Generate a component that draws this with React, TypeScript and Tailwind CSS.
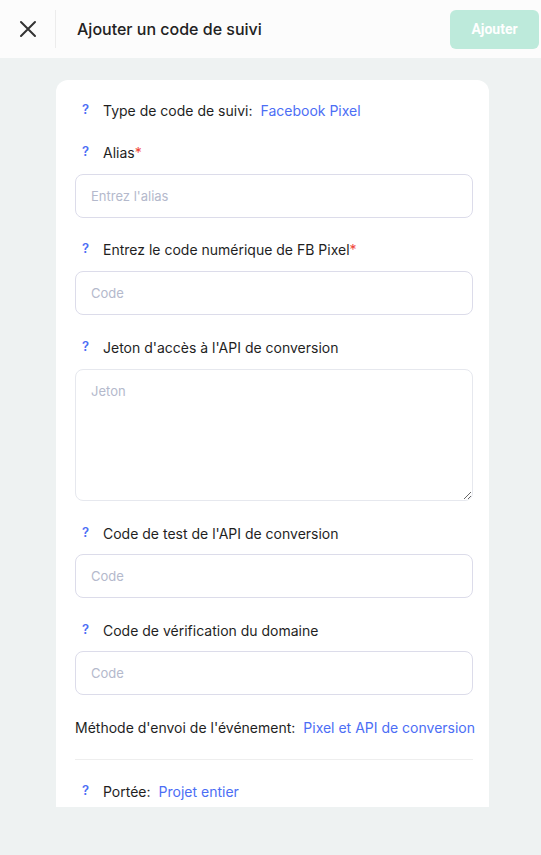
import React from "react";

const Help = () => (
    <span className="w-[21px] shrink-0 text-[13px] font-semibold text-[#4c6ef5]">?</span>
);

const Label = ({ text, required }: { text: string; required?: boolean }) => (
    <div className="flex items-center h-5 pl-[7px] text-[14px] text-[#1f1f1f] whitespace-nowrap">
        <Help />
        <span>
            {text}
            {required && <span className="text-[#f04438]">*</span>}
        </span>
    </div>
);

const Field = ({
    label,
    placeholder,
    required,
    top = "mt-[22px]",
    gap = "gap-3",
}: {
    label: string;
    placeholder: string;
    required?: boolean;
    top?: string;
    gap?: string;
}) => (
    <div className={`${top} flex flex-col ${gap}`}>
        <Label text={label} required={required} />
        <input
            placeholder={placeholder}
            className="h-[44px] w-full rounded-lg border border-[#dcdcea] bg-white px-[15px] text-[13px] outline-none placeholder:text-[#b4b9cc]"
        />
    </div>
);

const App = () => {
    return (
        <div className="h-[855px] w-full overflow-hidden bg-[#eef2f2] font-['Inter',sans-serif]">
            <header className="flex h-[58px] items-center justify-between bg-[#fcfcfc] pr-[2px]">
                <div className="flex h-full items-center">
                    <button className="flex h-full w-[55px] items-center justify-center text-[#333]">
                        <svg width="18" height="18" viewBox="0 0 18 18" fill="none" stroke="currentColor" strokeWidth="2" strokeLinecap="round">
                            <path d="M2 2L16 16M16 2L2 16" />
                        </svg>
                    </button>
                    <div className="h-[38px] w-px bg-[#ececec]" />
                    <h1 className="ml-[21px] text-[16px] font-medium text-[#222]">Ajouter un code de suivi</h1>
                </div>
                <button className="h-[39px] w-[89px] rounded-md bg-[#bdeadb] text-[14px] font-bold text-white font-['Roboto',sans-serif]">
                    Ajouter
                </button>
            </header>

            <main className="pl-[56px] pt-[22px]">
                <div className="h-[727px] w-[433px] overflow-hidden rounded-t-xl bg-white pl-[19px] pr-[16px] pt-5">
                    <div className="flex h-5 items-center whitespace-nowrap pl-[7px] text-[14px] text-[#1f1f1f]">
                        <Help />
                        <span>Type de code de suivi:</span>
                        <span className="ml-2 text-[#4c6ef5]">Facebook Pixel</span>
                    </div>

                    <Field label="Alias" placeholder="Entrez l'alias" required />
                    <Field label="Entrez le code numérique de FB Pixel" placeholder="Code" required top="mt-[21px]" />

                    <div className="mt-[22px] flex flex-col gap-3">
                        <Label text="Jeton d'accès à l'API de conversion" />
                        <textarea
                            placeholder="Jeton"
                            className="h-[132px] w-full rounded-lg border border-[#e6e8ee] bg-white px-[15px] py-3 text-[13px] outline-none placeholder:text-[#b4b9cc]"
                        />
                    </div>

                    <Field label="Code de test de l'API de conversion" placeholder="Code" gap="gap-[11px]" />
                    <Field label="Code de vérification du domaine" placeholder="Code" gap="gap-[11px]" />

                    <div className="mt-[22px] flex h-5 items-center whitespace-nowrap text-[14px] text-[#1f1f1f]">
                        <span>Méthode d'envoi de l'événement:</span>
                        <span className="ml-2 text-[#4c6ef5]">Pixel et API de conversion</span>
                    </div>

                    <div className="mt-[22px] h-px w-full bg-[#eeeeee]" />

                    <div className="mt-[21px] flex h-5 items-center whitespace-nowrap pl-[7px] text-[14px] text-[#1f1f1f]">
                        <Help />
                        <span>Portée:</span>
                        <span className="ml-2 text-[#4c6ef5]">Projet entier</span>
                    </div>
                </div>
            </main>
        </div>
    );
};

export default App;
